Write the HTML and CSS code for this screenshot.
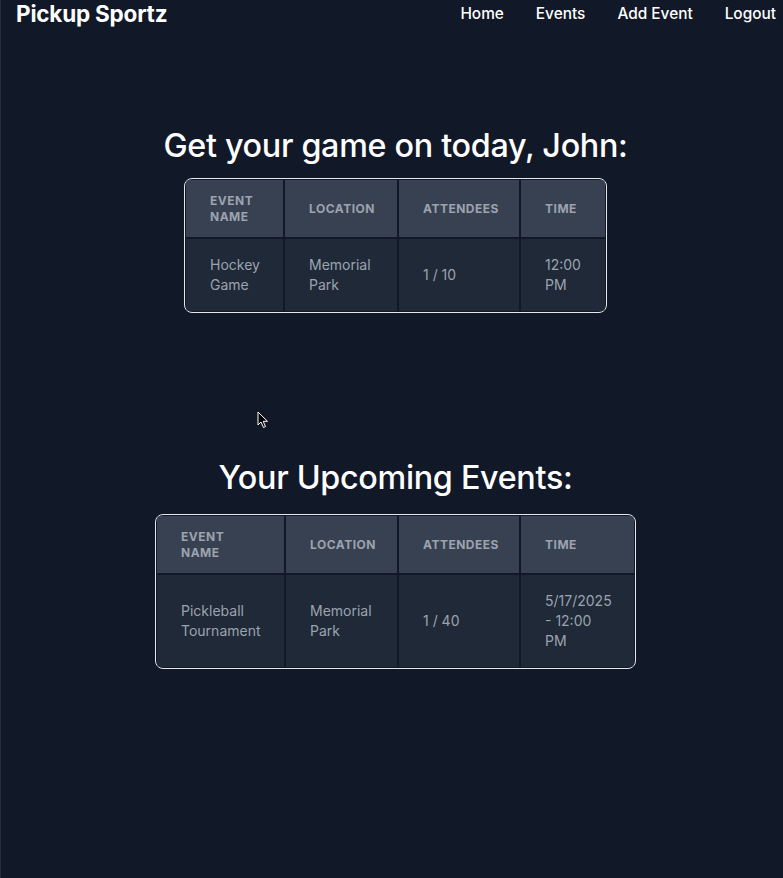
FILE: index.html
```html
<!DOCTYPE html>
<html lang="en">
<head>
<meta charset="utf-8">
<title>Pickup Sportz</title>
<link rel="stylesheet" href="styles.css">
</head>
<body>
<div class="page">
  <nav class="nav">
    <div class="brand">Pickup Sportz</div>
    <div class="links">
      <a href="#">Home</a>
      <a href="#">Events</a>
      <a href="#">Add Event</a>
      <a href="#">Logout</a>
    </div>
  </nav>

  <section class="section first">
    <h1 class="heading h-first">Get your game on today, John:</h1>
    <div class="table-wrap">
      <table class="events t-first">
        <colgroup>
          <col class="c1a"><col class="c2a"><col class="c3a"><col class="c4a">
        </colgroup>
        <thead>
          <tr>
            <th>Event<br>Name</th>
            <th>Location</th>
            <th>Attendees</th>
            <th>Time</th>
          </tr>
        </thead>
        <tbody>
          <tr>
            <td>Hockey<br>Game</td>
            <td>Memorial<br>Park</td>
            <td>1 / 10</td>
            <td>12:00<br>PM</td>
          </tr>
        </tbody>
      </table>
    </div>
  </section>

  <section class="section second">
    <h1 class="heading h-second">Your Upcoming Events:</h1>
    <div class="table-wrap">
      <table class="events t-second">
        <colgroup>
          <col class="c1b"><col class="c2b"><col class="c3b"><col class="c4b">
        </colgroup>
        <thead>
          <tr>
            <th>Event<br>Name</th>
            <th>Location</th>
            <th>Attendees</th>
            <th>Time</th>
          </tr>
        </thead>
        <tbody>
          <tr>
            <td>Pickleball<br>Tournament</td>
            <td>Memorial<br>Park</td>
            <td>1 / 40</td>
            <td>5/17/2025<br>- 12:00<br>PM</td>
          </tr>
        </tbody>
      </table>
    </div>
  </section>

  <svg class="cursor" width="12" height="18" viewBox="0 0 12 18" aria-hidden="true">
    <path d="M1 1 L1 14 L4 11 L6.5 16.5 L8.5 15.6 L6.2 10.3 L10.5 10.3 Z" fill="#000" stroke="#fff" stroke-width="1"/>
  </svg>
</div>
</body>
</html>
```

FILE: styles.css
```css
* { box-sizing: border-box; }
html, body { margin: 0; padding: 0; }
body {
  background: #111827;
  font-family: Inter, "Noto Sans", "Liberation Sans", sans-serif;
  color: #ffffff;
}
.page {
  position: relative;
  min-height: 878px;
  border-left: 1px solid #262c38;
}
.nav {
  display: flex;
  justify-content: space-between;
  align-items: center;
  height: 27px;
  padding: 0 7px 0 15px;
}
.brand {
  font-size: 22.5px;
  font-weight: 700;
  letter-spacing: -0.2px;
}
.links {
  display: flex;
  gap: 32px;
}
.links a {
  color: #ffffff;
  text-decoration: none;
  font-size: 15.4px;
  font-weight: 500;
}
.section {
  display: flex;
  flex-direction: column;
  align-items: center;
  padding-left: 7px;
}
.section.first { padding-top: 99px; }
.section.second { padding-top: 145px; }
.heading {
  margin: 0;
  font-size: 32.3px;
  font-weight: 500;
  line-height: 40px;
  letter-spacing: -0.3px;
}
.h-first { margin-bottom: 12px; }
.h-second { margin-bottom: 16px; }
.table-wrap {
  border: 1px solid #e5e7eb;
  border-radius: 8px;
  overflow: hidden;
  background: #111827;
}
.events {
  border-collapse: separate;
  border-spacing: 2px;
  table-layout: fixed;
  margin: -1px;
}
.t-first { width: 423px; }
.t-second { width: 481px; }
.c1a { width: 97px; }
.c2a { width: 112px; }
.c3a { width: 120px; }
.c4a { width: 84px; }
.c1b { width: 127px; }
.c2b { width: 111px; }
.c3b { width: 120px; }
.c4b { width: 113px; }
.events th {
  background: #374151;
  color: #9ca3af;
  font-size: 12px;
  font-weight: 700;
  text-transform: uppercase;
  letter-spacing: 0.5px;
  line-height: 16px;
  text-align: left;
  padding: 12px 24px;
  height: 57px;
}
.events td {
  background: #1f2937;
  color: #9ca3af;
  font-size: 14px;
  line-height: 20px;
  padding: 16px 24px;
  vertical-align: middle;
}
.cursor {
  position: absolute;
  left: 256px;
  top: 411px;
}
```
